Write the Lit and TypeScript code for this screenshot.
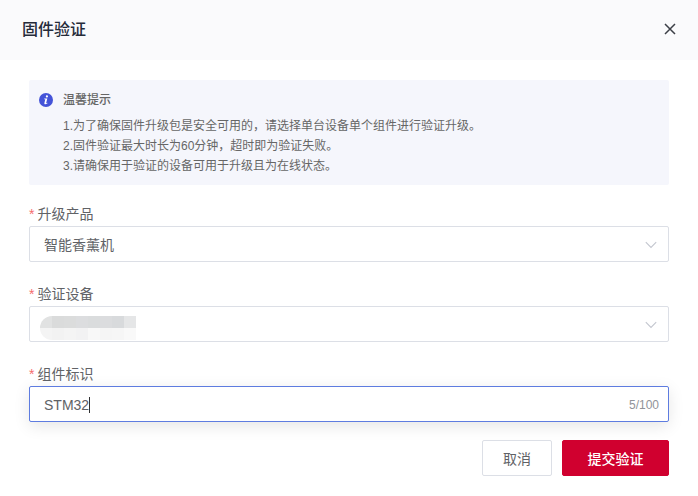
import { LitElement, html, css, svg } from "lit";
import { customElement, state, query } from "lit/decorators.js";

const chevron = html`<svg class="chevron" viewBox="0 0 12 12" aria-hidden="true">
  ${svg`<path d="M0.8 3.2 L6 8.4 L11.2 3.2" fill="none" stroke="#c3c6cf" stroke-width="1.1" />`}
</svg>`;

const MASK_TONES = [
  "#e1e2e2", "#dadbdb", "#dbdcdc", "#dcdddf", "#dadcdd", "#dbdcde", "#d8dadc", "#e5e6e7",
  "#f4f4f4", "#f2f2f2", "#f4f4f4", "#f2f2f3", "#f8f8f8", "#f5f5f5", "#f6f6f6", "#f9f9f9",
];

@customElement("app-root")
export class AppRoot extends LitElement {
  static styles = css`
    :host {
      display: block;
      min-height: 100vh;
      background: #fff;
      color: #606266;
      font: 14px/20px "Liberation Sans", "Noto Sans CJK SC", sans-serif;
    }
    * {
      box-sizing: border-box;
    }
    header {
      display: flex;
      align-items: center;
      justify-content: space-between;
      height: 60px;
      padding: 0 20px 2px 22px;
      background: #fafafc;
    }
    h1 {
      margin: 0;
      padding-top: 2px;
      font-size: 16px;
      line-height: 24px;
      font-weight: 500;
      color: #252b3a;
    }
    .close {
      display: grid;
      place-items: center;
      width: 16px;
      height: 16px;
      padding: 0;
      border: 0;
      background: none;
    }
    .close svg {
      width: 12px;
      height: 12px;
    }
    main {
      padding: 20px 29px;
    }
    .tip {
      display: grid;
      grid-template-columns: 14px 1fr;
      column-gap: 10px;
      align-items: center;
      padding: 10px 10px 9px;
      border-radius: 2px;
      background: #f5f6fc;
      color: #666;
      font-size: 12px;
      line-height: 20px;
    }
    .tip svg {
      width: 14px;
      height: 14px;
    }
    .tip h2 {
      margin: 0;
      font-size: 12px;
      line-height: 20px;
      font-weight: 500;
    }
    .tip ol {
      grid-column: 2;
      margin: 6px 0 0;
      padding: 0;
      list-style: none;
    }
    form {
      display: flex;
      flex-direction: column;
      gap: 20px;
      margin-top: 17px;
    }
    label {
      display: block;
      line-height: 24px;
    }
    label::before {
      content: "*";
      margin-right: 3px;
      color: #f56c6c;
    }
    .control {
      position: relative;
      display: grid;
    }
    select,
    .text {
      width: 100%;
      height: 36px;
      margin: 0;
      padding: 2px 14px 0;
      border: 1px solid #dcdfe6;
      border-radius: 2px;
      outline: 0;
      appearance: none;
      background: #fff;
      color: inherit;
      font: inherit;
    }
    .text {
      padding-right: 60px;
      border-color: #5e7ce0;
      box-shadow: 0 4px 16px rgba(0, 0, 0, 0.1);
      caret-color: transparent;
    }
    .chevron {
      position: absolute;
      right: 12px;
      top: 13px;
      width: 12px;
      height: 12px;
      pointer-events: none;
    }
    .mask {
      position: absolute;
      left: 11px;
      top: 10px;
      display: grid;
      grid-template-columns: repeat(8, 12px);
      grid-auto-rows: 12px;
      overflow: hidden;
      border-radius: 12px 0 0 12px;
      pointer-events: none;
    }
    .caret {
      position: absolute;
      left: 15px;
      top: 11px;
      height: 16px;
      border-right: 1px solid #303133;
      color: transparent;
      white-space: pre;
      pointer-events: none;
    }
    .count {
      position: absolute;
      right: 10px;
      top: 9px;
      color: #909399;
      font-size: 12px;
    }
    footer {
      display: flex;
      justify-content: flex-end;
      gap: 10px;
      margin-top: -2px;
    }
    footer button {
      min-width: 70px;
      height: 36px;
      padding: 1px 20px 0;
      border: 1px solid #dcdfe6;
      border-radius: 2px;
      background: #fff;
      color: inherit;
      font: inherit;
    }
    footer .primary {
      min-width: 107px;
      border-color: #d0002f;
      background: #d0002f;
      color: #fff;
      font-weight: 500;
    }
  `;

  @state() private component = "STM32";
  @query("#component") private field!: HTMLInputElement;

  firstUpdated() {
    this.field.focus();
  }

  private onInput(e: Event) {
    this.component = (e.target as HTMLInputElement).value;
  }

  render() {
    return html`
      <header>
        <h1>固件验证</h1>
        <button class="close" type="button" aria-label="关闭">
          <svg viewBox="0 0 12 12">
            <path d="M1 1 L11 11 M11 1 L1 11" fill="none" stroke="#3c3f47" stroke-width="1.5" />
          </svg>
        </button>
      </header>
      <main>
        <section class="tip">
          <svg viewBox="0 0 14 14" aria-hidden="true">
            <circle cx="7" cy="7" r="7" fill="#4453d8" />
            <circle cx="7.9" cy="3.4" r="1.1" fill="#fff" />
            <path d="M5.3 5.6 H8.3 L7.2 10 Q7.2 10.5 8.5 9.7 L8.3 10.4 Q7 11.4 5.9 11.2 Q5.1 11 5.4 9.9 L6.3 6.3 H5.1 Z" fill="#fff" />
          </svg>
          <h2>温馨提示</h2>
          <ol>
            <li>1.为了确保固件升级包是安全可用的，请选择单台设备单个组件进行验证升级。</li>
            <li>2.固件验证最大时长为60分钟，超时即为验证失败。</li>
            <li>3.请确保用于验证的设备可用于升级且为在线状态。</li>
          </ol>
        </section>
        <form @submit=${(e: Event) => e.preventDefault()}>
          <div>
            <label for="product">升级产品</label>
            <div class="control">
              <select id="product" required><option>智能香薰机</option></select>
              ${chevron}
            </div>
          </div>
          <div>
            <label for="device">验证设备</label>
            <div class="control">
              <select id="device" required><option></option></select>
              <div class="mask" aria-hidden="true">
                ${MASK_TONES.map((tone) => html`<span style="background:${tone}"></span>`)}
              </div>
              ${chevron}
            </div>
          </div>
          <div>
            <label for="component">组件标识</label>
            <div class="control">
              <input id="component" class="text" type="text" maxlength="100" required
                .value=${this.component} @input=${this.onInput} />
              <span class="caret" aria-hidden="true">${this.component}</span>
              <span class="count">${this.component.length}/100</span>
            </div>
          </div>
          <footer>
            <button type="button">取消</button>
            <button class="primary" type="submit">提交验证</button>
          </footer>
        </form>
      </main>
    `;
  }
}
